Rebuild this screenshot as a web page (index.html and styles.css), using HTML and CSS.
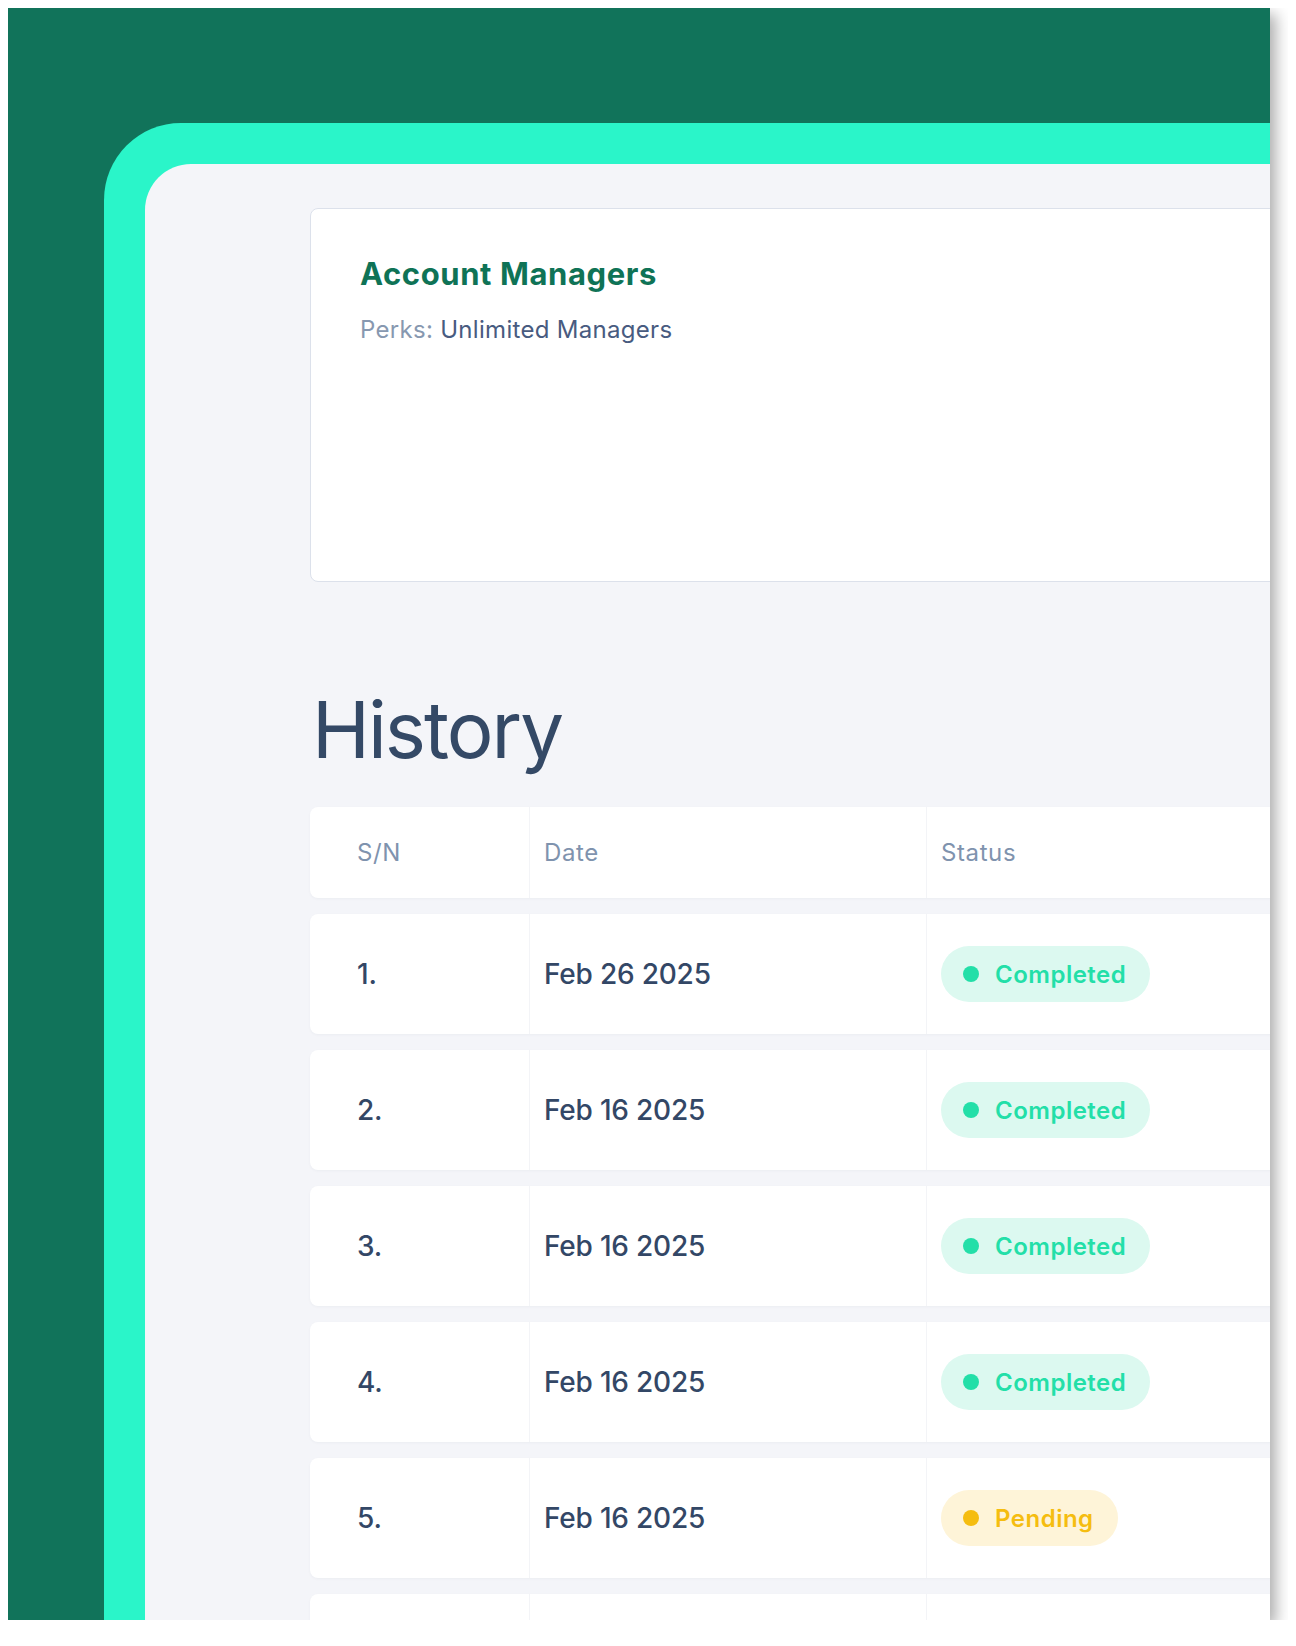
FILE: index.html
```html
<!DOCTYPE html>
<html lang="en">
<head>
<meta charset="utf-8">
<title>Account Managers – History</title>
<link rel="stylesheet" href="styles.css">
</head>
<body>
<div class="frame">
  <div class="accent">
    <main class="panel">
      <div class="content">
        <section class="card">
          <h2 class="card-title">Account Managers</h2>
          <p class="perks"><span class="perks-label">Perks:</span> Unlimited Managers</p>
        </section>

        <h1 class="history-title">History</h1>

        <div class="table">
          <div class="row head">
            <div class="cell c-sn">S/N</div>
            <div class="cell c-date">Date</div>
            <div class="cell c-status">Status</div>
          </div>
          <div class="row">
            <div class="cell c-sn">1.</div>
            <div class="cell c-date">Feb 26 2025</div>
            <div class="cell c-status"><span class="badge done"><span class="dot"></span>Completed</span></div>
          </div>
          <div class="row">
            <div class="cell c-sn">2.</div>
            <div class="cell c-date">Feb 16 2025</div>
            <div class="cell c-status"><span class="badge done"><span class="dot"></span>Completed</span></div>
          </div>
          <div class="row">
            <div class="cell c-sn">3.</div>
            <div class="cell c-date">Feb 16 2025</div>
            <div class="cell c-status"><span class="badge done"><span class="dot"></span>Completed</span></div>
          </div>
          <div class="row">
            <div class="cell c-sn">4.</div>
            <div class="cell c-date">Feb 16 2025</div>
            <div class="cell c-status"><span class="badge done"><span class="dot"></span>Completed</span></div>
          </div>
          <div class="row">
            <div class="cell c-sn">5.</div>
            <div class="cell c-date">Feb 16 2025</div>
            <div class="cell c-status"><span class="badge pending"><span class="dot"></span>Pending</span></div>
          </div>
          <div class="row">
            <div class="cell c-sn"></div>
            <div class="cell c-date"></div>
            <div class="cell c-status"></div>
          </div>
        </div>
      </div>
    </main>
  </div>
</div>
</body>
</html>
```

FILE: styles.css
```css
* { box-sizing: border-box; }

html, body {
  background: #ffffff;
}

body {
  margin: 8px;
  font-family: Inter, "Noto Sans", "Liberation Sans", sans-serif;
}

.frame {
  width: 1262px;
  height: 1612px;
  background: #11735a;
  overflow: hidden;
  display: flex;
  padding: 115px 0 0 96px;
  box-shadow: 6px 6px 14px rgba(0, 0, 0, 0.32);
}

.accent {
  flex: 1;
  display: flex;
  background: #2af5c9;
  border-top-left-radius: 77px;
  padding: 41px 0 0 41px;
  min-width: 0;
}

.panel {
  flex: 1;
  background: #f4f5f9;
  border-top-left-radius: 46px;
  padding: 44px 0 0 165px;
  overflow: hidden;
  min-width: 0;
}

.content {
  width: 1200px;
}

.card {
  background: #ffffff;
  border: 1px solid #dce1eb;
  border-radius: 8px;
  height: 374px;
  padding: 47px 49px 0;
}

.card-title {
  margin: 0;
  font-size: 31px;
  line-height: 36px;
  font-weight: 700;
  color: #0f7356;
  letter-spacing: 0.6px;
}

.perks {
  margin: 22px 0 0;
  font-size: 24px;
  line-height: 32px;
  color: #485b80;
  letter-spacing: 0.3px;
}

.perks-label {
  color: #8798b0;
}

.history-title {
  margin: 103px 0 0 2px;
  font-size: 78px;
  line-height: 90px;
  font-weight: 400;
  color: #344966;
  letter-spacing: -2px;
}

.table {
  margin-top: 32px;
  display: flex;
  flex-direction: column;
  gap: 16px;
}

.row {
  display: grid;
  grid-template-columns: 219px 397px 1fr;
  height: 120px;
  background: #ffffff;
  border-radius: 8px;
  box-shadow: 0 1px 3px rgba(30, 40, 70, 0.04);
  font-size: 28px;
  font-weight: 500;
  color: #334766;
  letter-spacing: -0.2px;
}

.row.head {
  height: 91px;
  font-size: 24px;
  font-weight: 400;
  color: #7f93ae;
  letter-spacing: 0.6px;
}

.cell {
  display: flex;
  align-items: center;
  padding-left: 14px;
}

.cell.c-sn {
  padding-left: 47px;
}

.cell.c-date,
.cell.c-status {
  border-left: 1px solid #f3f4f7;
}

.badge {
  display: inline-flex;
  align-items: center;
  gap: 16px;
  height: 56px;
  padding: 0 24px 0 22px;
  border-radius: 28px;
  font-size: 24px;
  font-weight: 600;
  letter-spacing: 0.5px;
}

.badge .dot {
  width: 16px;
  height: 16px;
  border-radius: 50%;
  background: currentColor;
}

.badge.done {
  background: #dcf9f0;
  color: #23dfa8;
}

.badge.pending {
  background: #fef4d8;
  color: #f5bd10;
}
```
